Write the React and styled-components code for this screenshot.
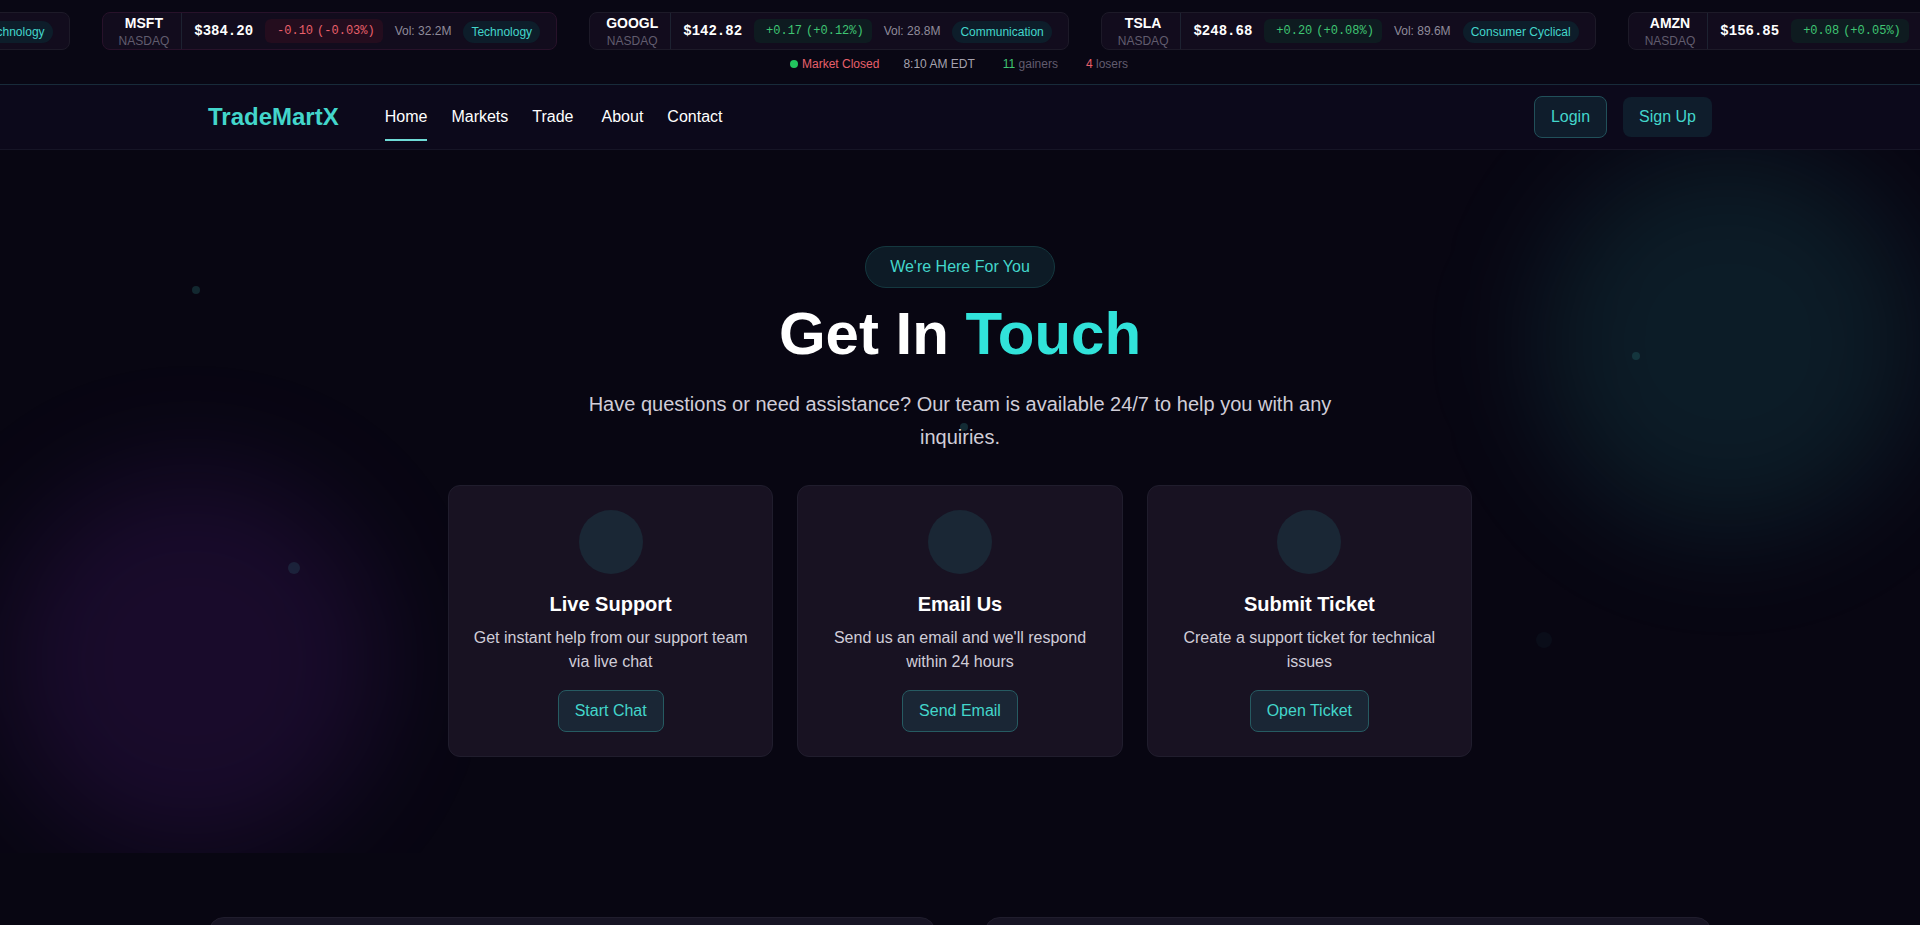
import React from "react";
import styled, { createGlobalStyle, css } from "styled-components";

const theme = {
    page: "#080612",
    bar: "#0c091b",
    card: "#181222",
    line: "#201d2d",
    accent: "#31e3da",
    accentSoft: "#43d6cb",
    up: "#3fc573",
    down: "#e8606b",
    text: "#ffffff",
    soft: "#d0cdd8",
    muted: "#8f8b9a",
    dim: "#615c6e",
};

const stocks = [
    { symbol: "AAPL", price: "$178.42", change: "+0.12", percent: "(+0.07%)", volume: "45.3M", sector: "Technology" },
    { symbol: "MSFT", price: "$384.20", change: "-0.10", percent: "(-0.03%)", volume: "32.2M", sector: "Technology" },
    { symbol: "GOOGL", price: "$142.82", change: "+0.17", percent: "(+0.12%)", volume: "28.8M", sector: "Communication" },
    { symbol: "TSLA", price: "$248.68", change: "+0.20", percent: "(+0.08%)", volume: "89.6M", sector: "Consumer Cyclical" },
    { symbol: "AMZN", price: "$156.85", change: "+0.08", percent: "(+0.05%)", volume: "41.7M", sector: "Consumer Cyclical" },
];

const navLinks = [
    { title: "Home", active: true },
    { title: "Markets" },
    { title: "Trade", menu: true },
    { title: "About" },
    { title: "Contact" },
];

const channels = [
    {
        title: "Live Support",
        text: "Get instant help from our support team via live chat",
        action: "Start Chat",
    },
    {
        title: "Email Us",
        text: "Send us an email and we'll respond within 24 hours",
        action: "Send Email",
    },
    {
        title: "Submit Ticket",
        text: "Create a support ticket for technical issues",
        action: "Open Ticket",
    },
];

const particles = [
    { left: 10, top: 136, size: 8, opacity: 0.16 },
    { left: 15, top: 412, size: 12, opacity: 0.12 },
    { left: 50, top: 273, size: 8, opacity: 0.18 },
    { left: 85, top: 202, size: 8, opacity: 0.14 },
    { left: 80, top: 482, size: 16, opacity: 0.04 },
];

const GlobalStyle = createGlobalStyle`
    *, *::before, *::after {
        box-sizing: border-box;
    }

    body {
        margin: 0;
        background: ${theme.page};
        color: ${theme.text};
        font-family: "Liberation Sans", Arial, sans-serif;
        font-size: 16px;
        line-height: 24px;
        overflow-x: hidden;
    }

    h1, h2, p, ul {
        margin: 0;
        padding: 0;
    }
`;

/* ---------- ticker ---------- */

const Ticker = styled.section`
    padding: 12px 0;
    background: #090714;
    border-bottom: 1px solid #182b3a;
    overflow: hidden;
`;

const Track = styled.div`
    display: flex;
    gap: 32px;
    width: max-content;
    transform: translateX(${({ $offset }) => $offset}px);
`;

const Stock = styled.article`
    display: flex;
    align-items: center;
    gap: 12px;
    height: 38px;
    padding: 0 16px;
    background: #120c1d;
    border: 1px solid ${({ $down }) => ($down ? "#28122a" : "#1d1a28")};
    border-radius: 8px;
    font-size: 12px;
    line-height: 16px;
    white-space: nowrap;
`;

const StockName = styled.div`
    padding-right: 12px;
    border-right: 1px solid #1d2231;
    text-align: center;
`;

const Symbol = styled.div`
    font-size: 14px;
    font-weight: 700;
    line-height: 20px;
`;

const Exchange = styled.div`
    color: ${theme.dim};
`;

const Price = styled.div`
    font-family: "Liberation Mono", monospace;
    font-size: 14px;
    font-weight: 700;
`;

const Change = styled.div`
    display: flex;
    gap: 4px;
    padding: 4px 8px 4px 12px;
    border-radius: 6px;
    font-family: "Liberation Mono", monospace;
    color: ${({ $down }) => ($down ? theme.down : theme.up)};
    background: ${({ $down }) => ($down ? "#240d1e" : "#0e1b20")};
`;

const Volume = styled.div`
    color: ${theme.muted};
`;

const Sector = styled.div`
    margin-top: 2px;
    padding: 3px 8px;
    border-radius: 11px;
    color: ${theme.accentSoft};
    background: #0d1d2a;
`;

const Status = styled.div`
    display: flex;
    justify-content: center;
    gap: 24px;
    padding: 6px 2px 0 0;
    font-size: 12px;
    line-height: 16px;
`;

const Market = styled.span`
    display: flex;
    align-items: center;
    gap: 4px;
    color: ${theme.down};

    &::before {
        content: "";
        width: 8px;
        height: 8px;
        border-radius: 50%;
        background: #22c55e;
    }
`;

const Clock = styled.time`
    color: #a5a2ae;
`;

const Stat = styled.span`
    margin-left: 4px;
    color: ${theme.dim};

    strong {
        font-weight: 400;
        color: ${({ $down }) => ($down ? theme.down : theme.up)};
    }
`;

/* ---------- navigation ---------- */

const Container = styled.div`
    width: 100%;
    max-width: 1536px;
    margin: 0 auto;
    padding: 0 16px;
`;

const Header = styled.header`
    background: ${theme.bar};
    border-bottom: 1px solid #161526;
`;

const NavBar = styled(Container)`
    display: flex;
    align-items: center;
    height: 64px;
`;

const Logo = styled.a`
    margin-right: 46px;
    color: ${theme.accentSoft};
    font-size: 24px;
    font-weight: 700;
    line-height: 32px;
    text-decoration: none;
`;

const NavList = styled.ul`
    display: flex;
    gap: 24px;
    list-style: none;
`;

const NavItem = styled.li`
    padding-right: ${({ $menu }) => ($menu ? "4px" : "0")};
`;

const NavLink = styled.a`
    position: relative;
    display: block;
    padding: 12px 0;
    color: ${theme.text};
    text-decoration: none;

    ${({ $active }) => $active && css`
        &::after {
            content: "";
            position: absolute;
            right: 0;
            bottom: 0;
            left: 0;
            height: 2px;
            background: #6fdad6;
        }
    `}
`;

const Account = styled.div`
    display: flex;
    align-items: center;
    gap: 16px;
    margin-left: auto;
`;

const Button = styled.button`
    padding: 8px 16px;
    border: 1px solid #265b62;
    border-radius: 8px;
    background: #1a2635;
    color: ${theme.accentSoft};
    font: inherit;
    cursor: pointer;
`;

const NavButton = styled(Button)`
    background: #0f1d2c;
    border: ${({ $outlined }) => ($outlined ? "1px solid #21505a" : "0")};
`;

/* ---------- hero ---------- */

const Hero = styled.section`
    position: relative;
    padding: 96px 16px;
    overflow: hidden;
    text-align: center;
`;

const Glow = styled.div`
    position: absolute;
    width: 384px;
    height: 384px;
    border-radius: 50%;
    filter: blur(56px);
    ${({ $purple }) => $purple
        ? "bottom: 0; left: 0; background: rgba(147, 51, 234, 0.12);"
        : "top: 0; right: 0; background: rgba(45, 212, 208, 0.11);"}
`;

const Particle = styled.span`
    position: absolute;
    border-radius: 50%;
    background: #4ad8d0;
`;

const HeroContent = styled.div`
    position: relative;
    max-width: 1024px;
    margin: 0 auto;
`;

const Badge = styled.span`
    display: inline-block;
    padding: 8px 24px;
    border: 1px solid #14383f;
    border-radius: 21px;
    background: #0d1b26;
    color: ${theme.accentSoft};
    vertical-align: top;
`;

const Title = styled.h1`
    margin: 16px 0 24px;
    font-size: 60px;
    line-height: 60px;

    span {
        color: ${theme.accent};
    }
`;

const Lead = styled.p`
    max-width: 768px;
    margin: 0 auto 31px;
    color: ${theme.soft};
    font-size: 20px;
    line-height: 33px;
`;

const Cards = styled.div`
    display: grid;
    grid-template-columns: repeat(3, 1fr);
    gap: 24px;
`;

const Card = styled.article`
    padding: 24px;
    border: 1px solid ${theme.line};
    border-radius: 12px;
    background: ${theme.card};
`;

const CardIcon = styled.div`
    width: 64px;
    height: 64px;
    margin: 0 auto 16px;
    border-radius: 50%;
    background: #1a2735;
`;

const CardTitle = styled.h2`
    margin-bottom: 8px;
    font-size: 20px;
    line-height: 28px;
`;

const CardText = styled.p`
    margin-bottom: 16px;
    color: ${theme.soft};
`;

/* ---------- panels under the hero ---------- */

const Panels = styled(Container)`
    display: grid;
    grid-template-columns: 1fr 1fr;
    gap: 48px;
    padding: 64px 16px;
`;

const Panel = styled.div`
    min-height: 320px;
    border: 1px solid ${theme.line};
    border-radius: 16px;
    background: #171424;
`;

function StockTicker() {
    return (
        <Ticker>
            <Track $offset={-386}>
                {stocks.map((stock) => {
                    const down = stock.change.startsWith("-");
                    return (
                        <Stock key={stock.symbol} $down={down}>
                            <StockName>
                                <Symbol>{stock.symbol}</Symbol>
                                <Exchange>NASDAQ</Exchange>
                            </StockName>
                            <Price>{stock.price}</Price>
                            <Change $down={down}>
                                <span>{stock.change}</span>
                                <span>{stock.percent}</span>
                            </Change>
                            <Volume>Vol: {stock.volume}</Volume>
                            <Sector>{stock.sector}</Sector>
                        </Stock>
                    );
                })}
            </Track>
            <Status>
                <Market>Market Closed</Market>
                <Clock>8:10 AM EDT</Clock>
                <Stat><strong>11</strong> gainers</Stat>
                <Stat $down><strong>4</strong> losers</Stat>
            </Status>
        </Ticker>
    );
}

function Navigation() {
    return (
        <Header>
            <NavBar as="nav">
                <Logo href="#home">TradeMartX</Logo>
                <NavList>
                    {navLinks.map((link) => (
                        <NavItem key={link.title} $menu={link.menu}>
                            <NavLink href={`#${link.title.toLowerCase()}`} $active={link.active}>
                                {link.title}
                            </NavLink>
                        </NavItem>
                    ))}
                </NavList>
                <Account>
                    <NavButton type="button" $outlined>Login</NavButton>
                    <NavButton type="button">Sign Up</NavButton>
                </Account>
            </NavBar>
        </Header>
    );
}

function ContactHero() {
    return (
        <Hero>
            <Glow />
            <Glow $purple />
            {particles.map(({ left, top, size, opacity }) => (
                <Particle
                    key={left}
                    style={{ left: `${left}%`, top, width: size, height: size, opacity }}
                />
            ))}
            <HeroContent>
                <Badge>We're Here For You</Badge>
                <Title>Get In <span>Touch</span></Title>
                <Lead>
                    Have questions or need assistance? Our team is available 24/7 to help you with any inquiries.
                </Lead>
                <Cards>
                    {channels.map((channel) => (
                        <Card key={channel.title}>
                            <CardIcon />
                            <CardTitle>{channel.title}</CardTitle>
                            <CardText>{channel.text}</CardText>
                            <Button type="button">{channel.action}</Button>
                        </Card>
                    ))}
                </Cards>
            </HeroContent>
        </Hero>
    );
}

export default function App() {
    return (
        <>
            <GlobalStyle />
            <StockTicker />
            <Navigation />
            <main>
                <ContactHero />
                <Panels>
                    <Panel />
                    <Panel />
                </Panels>
            </main>
        </>
    );
}
